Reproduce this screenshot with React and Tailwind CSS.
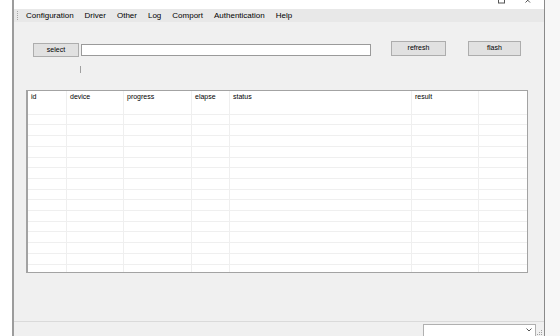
import React from "react";

const font = { fontFamily: "'Liberation Sans', Arial, sans-serif" };

const widths = ["w-[39px]", "w-[57px]", "w-[68px]", "w-[38px]", "w-[182px]", "w-[67px]"];
const heads = ["id", "device", "progress", "elapse", "status", "result"];

function GridRow({ labels, className }) {
  return (
    <div className={"flex shrink-0 " + className}>
      {widths.map((w, i) => (
        <div key={i} className={w + " shrink-0 border-r border-[#efefef] pl-[3px] flex items-center"}>
          {labels ? labels[i] : null}
        </div>
      ))}
      <div className="flex-1" />
    </div>
  );
}

function Button({ label, className }) {
  return (
    <div className={"flex items-center justify-center bg-[#e1e1e1] border border-[#adadad] text-[7px] text-black " + className}>
      {label}
    </div>
  );
}

export default function App() {
  const menus = ["Configuration", "Driver", "Other", "Log", "Comport", "Authentication", "Help"];
  const rows = Array.from({ length: 15 });

  return (
    <div className="w-[560px] h-[336px] bg-white flex overflow-hidden" style={font}>
      <div className="w-[12px] shrink-0" />
      <div className="w-[533px] h-full flex flex-col border-l-2 border-r border-l-[#9c9c9c] border-r-[#8a8a8a]">
        {/* title bar */}
        <div className="h-[9px] bg-white flex justify-end pr-[12px] overflow-hidden">
          <svg width="36" height="9" viewBox="0 0 36 9">
            <rect x="2.5" y="-4" width="6" height="7" fill="none" stroke="#555" strokeWidth="1" />
            <path d="M29.5 -2 L34 2.5 M34 -2 L29.5 2.5" stroke="#555" strokeWidth="1" />
          </svg>
        </div>

        {/* menu bar */}
        <div className="h-[13px] bg-[#e8e8e8] flex items-center">
          <svg width="2" height="10" className="ml-[3px] mr-[7px]">
            {[0, 2, 4, 6, 8].map((y) => (
              <rect key={y} x="0" y={y} width="1" height="1" fill="#a6a6a6" />
            ))}
          </svg>
          <div className="flex gap-[11px] text-[8px] text-black">
            {menus.map((m) => (
              <span key={m}>{m}</span>
            ))}
          </div>
        </div>

        {/* body */}
        <div className="flex-1 bg-[#f0f0f0] flex flex-col">
          <div className="flex items-start mt-[19px] ml-[19px] h-[16px]">
            <Button label="select" className="w-[46px] h-[14px] mt-[2px]" />
            <div className="w-[290px] h-[12px] mt-[3px] ml-[2px] bg-white border border-[#9a9a9a]" />
            <Button label="refresh" className="w-[55px] h-[15px] ml-[20px]" />
            <Button label="flash" className="w-[53px] h-[15px] ml-[22px]" />
          </div>
          <div className="ml-[66px] mt-[9px] w-px h-[7px] bg-[#a0a0a0]" />

          <div className="ml-[12px] mt-[17px] w-[502px] h-[183px] bg-white border-l-2 border-t border-r border-b border-[#a3a3a3] flex flex-col overflow-hidden text-[7px] text-black">
            <GridRow labels={heads} className="h-[13px]" />
            {rows.map((_, i) => (
              <GridRow key={i} className="h-[10.714px] border-b border-[#efefef]" />
            ))}
            <GridRow className="flex-1" />
          </div>
        </div>

        {/* status bar */}
        <div className="h-[15px] shrink-0 bg-[#f0f0f0] border-t border-[#dadada] flex items-start justify-end pt-[2px] overflow-hidden">
          <div className="w-[113px] h-[16px] bg-white border border-[#b0b0b0] flex justify-end pr-[3px] pt-[3px]">
            <svg width="6" height="4" viewBox="0 0 6 4">
              <path d="M0.5 0.5 L3 3 L5.5 0.5" fill="none" stroke="#555" strokeWidth="1" />
            </svg>
          </div>
          <svg width="8" height="12" className="shrink-0">
            <rect x="5" y="6" width="1" height="1" fill="#a0a0a0" />
            <rect x="3" y="8" width="1" height="1" fill="#a0a0a0" />
            <rect x="5" y="8" width="1" height="1" fill="#a0a0a0" />
            <rect x="1" y="10" width="1" height="1" fill="#a0a0a0" />
            <rect x="3" y="10" width="1" height="1" fill="#a0a0a0" />
            <rect x="5" y="10" width="1" height="1" fill="#a0a0a0" />
          </svg>
        </div>
      </div>
      <div className="flex-1 bg-[#f7f7f7]" />
    </div>
  );
}
